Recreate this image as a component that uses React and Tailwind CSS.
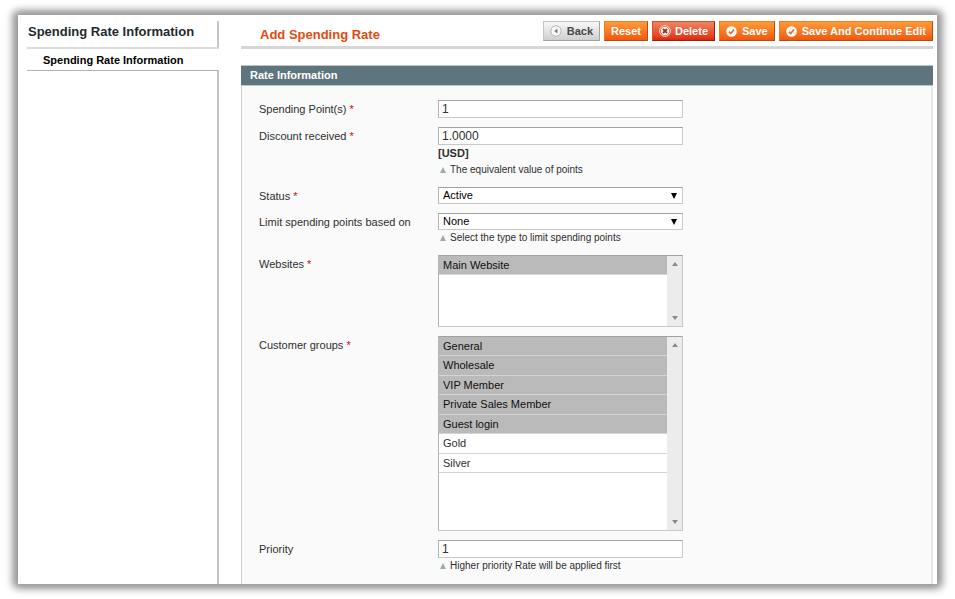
import React from "react";

const labelText = "text-[11px] leading-[18px] text-[#2f2f2f]";
const fieldBorder = "border border-t-[#a2a2a2] border-l-[#b4b4b4] border-r-[#c8c8c8] border-b-[#c8c8c8]";

function Field({ id, label, required, children }) {
  return (
    <div className="flex">
      <div className="h-[17px] w-[179px] shrink-0">
        <label htmlFor={id} className={`block ${labelText}`}>
          {label}
          {required && <span className="text-[#d40707]"> *</span>}
        </label>
      </div>
      <div className="w-[245px]">{children}</div>
    </div>
  );
}

function Note({ children }) {
  return (
    <p className="flex items-center pl-[2px] text-[10px] leading-[16px] text-[#2f2f2f]">
      <svg width="6" height="6" viewBox="0 0 6 6" className="mr-[4px] shrink-0" aria-hidden="true">
        <path d="M3 0 6 6H0z" fill="#9aacb2" />
      </svg>
      {children}
    </p>
  );
}

function TextField({ id, value }) {
  return (
    <input
      id={id}
      type="text"
      defaultValue={value}
      className={`block h-[18px] w-full bg-white px-[3px] text-[12px] text-[#2f2f2f] outline-none ${fieldBorder}`}
    />
  );
}

function SelectField({ id, options }) {
  return (
    <div className="relative">
      <select
        id={id}
        className={`block h-[17px] w-full appearance-none bg-white px-[4px] text-[11px] leading-[15px] text-black outline-none ${fieldBorder}`}
      >
        {options.map((o) => (
          <option key={o}>{o}</option>
        ))}
      </select>
      <svg width="6" height="6" viewBox="0 0 6 6" className="pointer-events-none absolute top-[6px] right-[6px]" aria-hidden="true">
        <path d="M0 0H6L3 6z" fill="#000" />
      </svg>
    </div>
  );
}

function ListBox({ id, options, selected, height }) {
  return (
    <div className={`flex bg-white ${height} ${fieldBorder}`}>
      <select
        id={id}
        multiple
        defaultValue={selected}
        className="h-full min-w-0 flex-1 appearance-none overflow-hidden bg-white p-0 text-[11px] text-[#2f2f2f] outline-none"
      >
        {options.map((o) => (
          <option
            key={o}
            className="h-[19px] min-h-0 border-b border-[#d4d4d4] px-[4px] pt-[3px] pb-0 checked:bg-[#bababa] checked:bg-linear-to-b checked:from-[#bababa] checked:to-[#bababa] even:h-[20px]"
          >
            {o}
          </option>
        ))}
      </select>
      <div className="flex w-[15px] flex-col items-center justify-between bg-[#ececec] py-[6px]">
        <svg width="6" height="4" viewBox="0 0 6 4" aria-hidden="true">
          <path d="M3 0 6 4H0z" fill="#8a8a8a" />
        </svg>
        <svg width="6" height="4" viewBox="0 0 6 4" aria-hidden="true">
          <path d="M0 0H6L3 4z" fill="#8a8a8a" />
        </svg>
      </div>
    </div>
  );
}

const tones = {
  orange: "border-t-[#ee7d1e] border-l-[#ee7d1e] border-r-[#b84c0a] border-b-[#b84c0a] bg-linear-to-b from-[#fd9a38] to-[#f2560c] text-white",
  red: "border-t-[#d8502c] border-l-[#d8502c] border-r-[#a01d08] border-b-[#a01d08] bg-linear-to-b from-[#f0835f] to-[#dc2708] text-white",
  gray: "border-t-[#c4c4c4] border-l-[#c4c4c4] border-r-[#a2a2a2] border-b-[#a2a2a2] bg-linear-to-b from-[#f8f8f8] to-[#cfcfcf] text-[#474747]",
};

function ActionButton({ tone, icon, children }) {
  return (
    <button
      type="button"
      className={`flex h-[20px] items-center border px-[6px] text-[11px] leading-[18px] font-bold whitespace-nowrap ${tones[tone]}`}
    >
      {icon}
      {children}
    </button>
  );
}

const CheckIcon = () => (
  <svg width="11" height="11" viewBox="0 0 11 11" className="mr-[5px]" aria-hidden="true">
    <circle cx="5.5" cy="5.5" r="5.3" fill="#fff" />
    <path d="M3 5.6 4.8 7.5 8 3.4" fill="none" stroke="#ee6a1c" strokeWidth="1.7" />
  </svg>
);

const BackIcon = () => (
  <svg width="12" height="12" viewBox="0 0 12 12" className="mr-[5px]" aria-hidden="true">
    <circle cx="6" cy="6" r="5.2" fill="#f8f8f8" stroke="#b4b4b4" />
    <path d="M7.5 3.5V8.5L4.2 6z" fill="#7c7c7c" />
  </svg>
);

const DeleteIcon = () => (
  <svg width="12" height="12" viewBox="0 0 12 12" className="mr-[4px]" aria-hidden="true">
    <circle cx="6" cy="6" r="5.4" fill="#d8543a" stroke="#ffd9cd" strokeWidth="1" />
    <circle cx="6" cy="6" r="4.2" fill="#fff" />
    <path d="M4 4 8 8M8 4 4 8" stroke="#b62a10" strokeWidth="1.9" />
  </svg>
);

export default function App() {
  return (
    <div className="flex min-h-screen bg-white px-[18px] py-[15px] font-['Liberation_Sans',Arial,sans-serif]">
      <div className="flex flex-1 bg-white pt-[6px] pr-[4px] pl-[9px] shadow-[-2px_0_8px_3px_#999,2px_0_8px_3px_#999]">
        <aside className="flex w-[192px] shrink-0 flex-col">
          <h3 className="h-[28px] border-r-2 border-b-2 border-r-[#c6c6c6] border-b-[#dcdcdc] pl-px text-[13px] leading-[21px] font-bold whitespace-nowrap text-[#1f2a2e]">
            Spending Rate Information
          </h3>
          <a href="#rate" className="block h-[22px] border-b border-[#b4b4b4] pl-[16px] text-[11px] leading-[22px] font-bold whitespace-nowrap text-black">
            Spending Rate Information
          </a>
          <div className="flex-1 border-r-2 border-[#c6c6c6]" />
        </aside>

        <main className="ml-[22px] flex min-w-0 flex-1 flex-col">
          <header className="flex h-[28px] items-start justify-between border-b-[3px] border-[#d6d6d6]">
            <h1 className="pl-[19px] text-[13px] leading-[27px] font-bold whitespace-nowrap text-[#e44a0c]">Add Spending Rate</h1>
            <div className="flex gap-[4px]">
              <ActionButton tone="gray" icon={<BackIcon />}>Back</ActionButton>
              <ActionButton tone="orange">Reset</ActionButton>
              <ActionButton tone="red" icon={<DeleteIcon />}>Delete</ActionButton>
              <ActionButton tone="orange" icon={<CheckIcon />}>Save</ActionButton>
              <ActionButton tone="orange" icon={<CheckIcon />}>Save And Continue Edit</ActionButton>
            </div>
          </header>

          <section id="rate" className="mt-[16px] flex flex-1 flex-col">
            <h2 className="h-[21px] border-y border-t-[#b9c5c9] border-b-[#b9c5c9] bg-[#5e757e] pl-[9px] text-[11px] leading-[19px] font-bold text-white">
              Rate Information
            </h2>
            <form className="flex flex-1 flex-col gap-[9px] border-r-2 border-l border-r-[#e6e6e6] border-l-[#cfcfcf] bg-[#fafafa] pt-[14px] pb-[9px] pl-[17px]">
              <Field id="points" label="Spending Point(s)" required>
                <TextField id="points" value="1" />
              </Field>
              <Field id="discount" label="Discount received" required>
                <TextField id="discount" value="1.0000" />
                <strong className="block text-[11px] leading-[17px] text-[#2f2f2f]">[USD]</strong>
                <Note>The equivalent value of points</Note>
              </Field>
              <Field id="status" label="Status" required>
                <SelectField id="status" options={["Active", "Inactive"]} />
              </Field>
              <Field id="limit" label="Limit spending points based on">
                <SelectField id="limit" options={["None"]} />
                <Note>Select the type to limit spending points</Note>
              </Field>
              <Field id="websites" label="Websites" required>
                <ListBox id="websites" height="h-[72px]" options={["Main Website"]} selected={["Main Website"]} />
              </Field>
              <Field id="groups" label="Customer groups" required>
                <ListBox
                  id="groups"
                  height="h-[195px]"
                  options={["General", "Wholesale", "VIP Member", "Private Sales Member", "Guest login", "Gold", "Silver"]}
                  selected={["General", "Wholesale", "VIP Member", "Private Sales Member", "Guest login"]}
                />
              </Field>
              <Field id="priority" label="Priority">
                <TextField id="priority" value="1" />
                <Note>Higher priority Rate will be applied first</Note>
              </Field>
            </form>
          </section>
        </main>
      </div>
    </div>
  );
}
